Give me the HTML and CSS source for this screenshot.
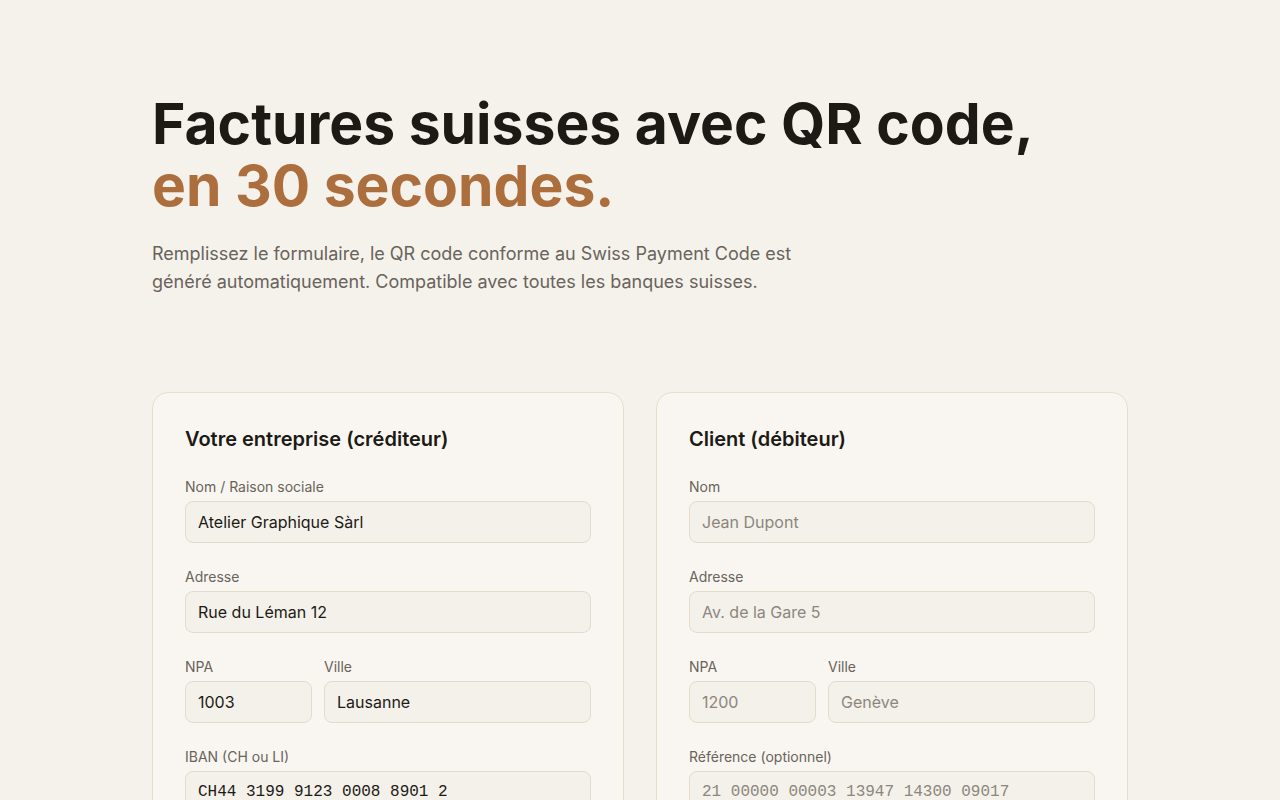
FILE: index.html
```html
<!DOCTYPE html>
<html lang="fr">
<head>
  <meta charset="UTF-8">
  <meta name="viewport" content="width=device-width, initial-scale=1.0">
  <title>Factures suisses avec QR code</title>
  <link rel="stylesheet" href="styles.css">
</head>
<body>

<main class="page">
  <!-- Hero -->
  <header class="hero">
    <h1 class="hero-title">Factures suisses avec QR code,<br><span class="accent">en 30 secondes.</span></h1>
    <p class="hero-lead">Remplissez le formulaire, le QR code conforme au Swiss Payment Code est généré automatiquement. Compatible avec toutes les banques suisses.</p>
  </header>

  <!-- Forms -->
  <section class="cards">
    <div class="card">
      <h2 class="card-title">Votre entreprise (créditeur)</h2>
      <div class="field">
        <label for="crName">Nom / Raison sociale</label>
        <input type="text" id="crName" class="input" value="Atelier Graphique Sàrl">
      </div>
      <div class="field">
        <label for="crAddr">Adresse</label>
        <input type="text" id="crAddr" class="input" value="Rue du Léman 12">
      </div>
      <div class="field-row">
        <div class="field field-npa">
          <label for="crNpa">NPA</label>
          <input type="text" id="crNpa" class="input" value="1003">
        </div>
        <div class="field field-city">
          <label for="crCity">Ville</label>
          <input type="text" id="crCity" class="input" value="Lausanne">
        </div>
      </div>
      <div class="field">
        <label for="crIban">IBAN (CH ou LI)</label>
        <input type="text" id="crIban" class="input mono" value="CH44 3199 9123 0008 8901 2">
      </div>
    </div>

    <div class="card">
      <h2 class="card-title">Client (débiteur)</h2>
      <div class="field">
        <label for="dbName">Nom</label>
        <input type="text" id="dbName" class="input" placeholder="Jean Dupont">
      </div>
      <div class="field">
        <label for="dbAddr">Adresse</label>
        <input type="text" id="dbAddr" class="input" placeholder="Av. de la Gare 5">
      </div>
      <div class="field-row">
        <div class="field field-npa">
          <label for="dbNpa">NPA</label>
          <input type="text" id="dbNpa" class="input" placeholder="1200">
        </div>
        <div class="field field-city">
          <label for="dbCity">Ville</label>
          <input type="text" id="dbCity" class="input" placeholder="Genève">
        </div>
      </div>
      <div class="field">
        <label for="dbRef">Référence (optionnel)</label>
        <input type="text" id="dbRef" class="input mono" placeholder="21 00000 00003 13947 14300 09017">
      </div>
    </div>
  </section>
</main>

</body>
</html>
```

FILE: styles.css
```css
* {
  box-sizing: border-box;
}
body {
  margin: 0;
  background: #f5f2ec;
  color: #1c1a15;
  font-family: Inter, "Noto Sans", sans-serif;
}
.page {
  width: 976px;
  margin: 0 auto;
  padding-top: 93px;
}
.hero-title {
  margin: 0;
  font-size: 57px;
  line-height: 62px;
  font-weight: 700;
  color: #1c1a15;
}
.accent {
  color: #ad6e3e;
}
.hero-lead {
  max-width: 660px;
  margin: 23px 0 0;
  font-size: 18px;
  line-height: 28px;
  color: #69635b;
}
.cards {
  display: grid;
  grid-template-columns: minmax(0, 1fr) minmax(0, 1fr);
  gap: 32px;
  margin-top: 96px;
}
.card {
  background: #f9f6f1;
  border: 1px solid #e5dfcd;
  border-radius: 16px;
  padding: 32px 32px 40px;
}
.card-title {
  margin: 0 0 24px;
  font-size: 20px;
  line-height: 28px;
  font-weight: 600;
  color: #1c1a15;
}
.field {
  display: flex;
  flex-direction: column;
  margin-bottom: 24px;
}
.field label {
  font-size: 14px;
  line-height: 20px;
  margin-bottom: 4px;
  color: #69635b;
}
.input {
  width: 100%;
  height: 42px;
  padding: 0 12px;
  border: 1px solid #e3dccb;
  border-radius: 8px;
  background: #f4f1ea;
  font-family: Inter, "Noto Sans", sans-serif;
  font-size: 16px;
  color: #1c1a15;
  outline: none;
}
.input::placeholder {
  color: #8c867d;
}
.mono {
  font-family: "Liberation Mono", "DejaVu Sans Mono", monospace;
  font-size: 16px;
}
.field-row {
  display: flex;
  gap: 12px;
}
.field-npa {
  width: 127px;
  flex: none;
}
.field-city {
  flex: 1;
  min-width: 0;
}
```
